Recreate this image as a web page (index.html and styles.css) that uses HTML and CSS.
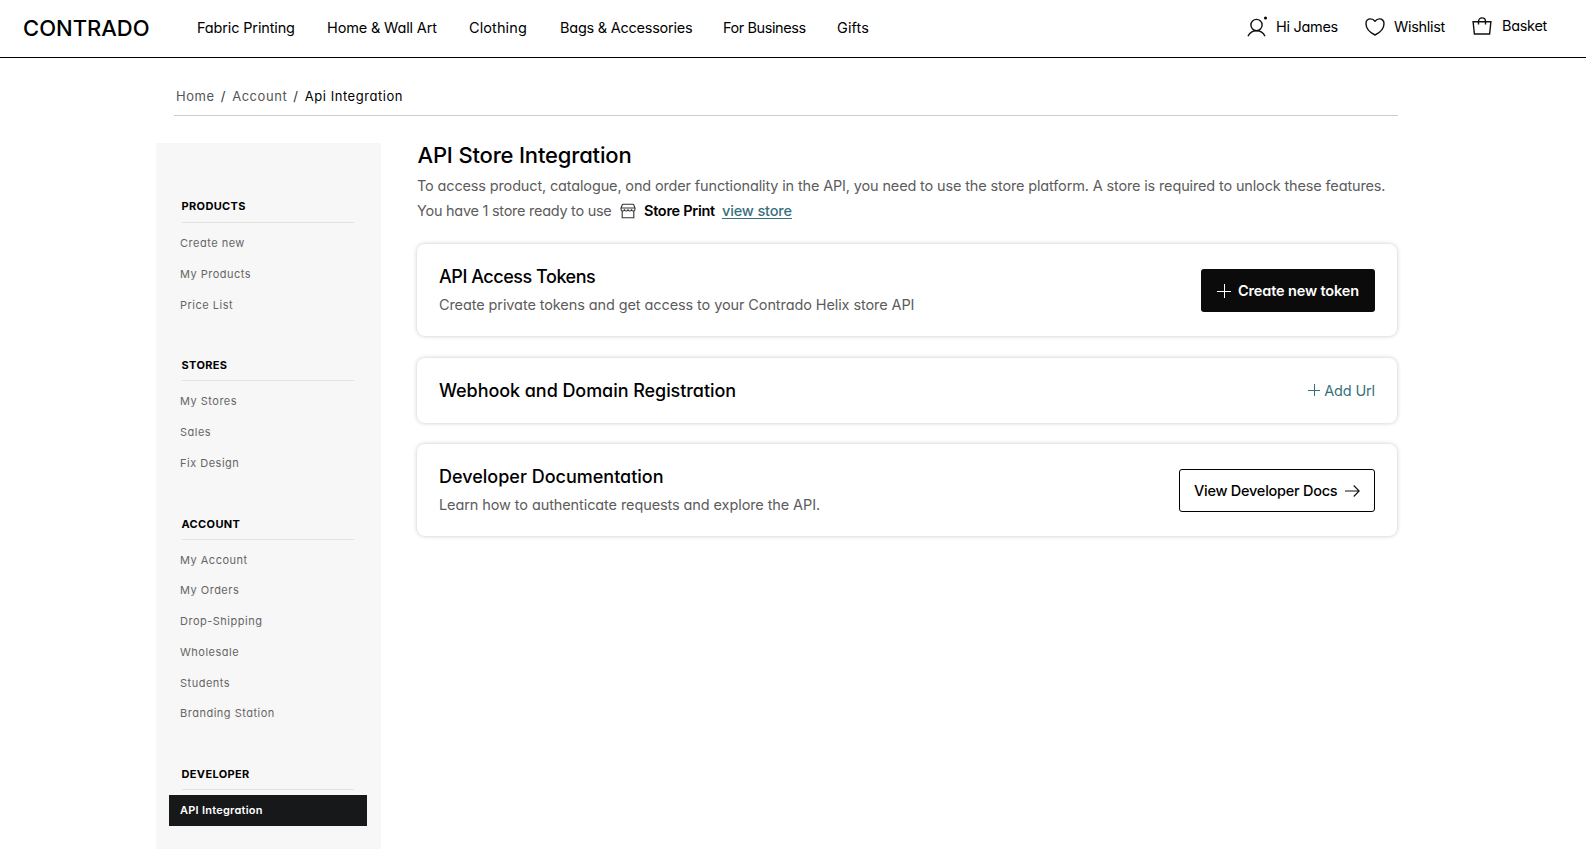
FILE: index.html
```
<!DOCTYPE html>
<html lang="en">
  <head>
    <meta charset="utf-8">
    <title>Api Integration</title>
    <link rel="stylesheet" href="styles.css">
  </head>
  <body>
    <header class="header">
      <a class="logo">CONTRADO</a>
      <nav class="main-nav">
        <a>Fabric Printing</a>
        <a>Home &amp; Wall Art</a>
        <a class="loose">Clothing</a>
        <a class="tight">Bags &amp; Accessories</a>
        <a class="tighter">For Business</a>
        <a class="loose">Gifts</a>
      </nav>
      <div class="user-nav">
        <a>
          <svg width="20" height="22" viewBox="0 0 20 22" fill="none" stroke="#111" stroke-width="1.4">
            <circle cx="9.500" cy="9" r="5.600"/>
            <path d="M1 20.300C2.600 17 5.800 14.800 9.500 14.800s6.900 2.200 8.500 5.500"/>
            <circle cx="18.500" cy="2" r="1.500" fill="#000" stroke="none"/>
          </svg>
          <span>Hi James</span>
        </a>
        <a class="wishlist">
          <svg width="20" height="18" viewBox="0 0 20 18" fill="none" stroke="#111" stroke-width="1.4" stroke-linejoin="round">
            <path d="M10 3.2C8.600 1.500 6.900.9 5.600.9 2.900.9 1 2.900 1 5.700c0 4.800 4.200 8.900 9 11.300 4.800-2.400 9-6.500 9-11.300C19 2.900 17.100.9 14.400.9c-1.300 0-3 .6-4.400 2.300z"/>
          </svg>
          <span>Wishlist</span>
        </a>
        <a class="basket">
          <svg width="20" height="18" viewBox="0 0 20 18" fill="none" stroke="#111" stroke-width="1.4">
            <path d="M1.100 4.700h17.800l-1.300 12.300H2.400z"/>
            <path d="M6.500 7.500V4.500C6.500 2.300 8 .9 10 .9s3.500 1.400 3.500 3.600v3"/>
          </svg>
          <span>Basket</span>
        </a>
      </div>
    </header>

    <div class="breadcrumb">
      <a>Home</a><i>/</i><a>Account</a><i>/</i><b>Api Integration</b>
    </div>

    <div class="page">
      <aside class="sidebar">
        <h4>PRODUCTS</h4>
        <ul>
          <li>Create new</li>
          <li>My Products</li>
          <li>Price List</li>
        </ul>
        <h4>STORES</h4>
        <ul>
          <li>My Stores</li>
          <li>Sales</li>
          <li>Fix Design</li>
        </ul>
        <h4>ACCOUNT</h4>
        <ul>
          <li>My Account</li>
          <li>My Orders</li>
          <li>Drop-Shipping</li>
          <li>Wholesale</li>
          <li>Students</li>
          <li>Branding Station</li>
        </ul>
        <h4>DEVELOPER</h4>
        <ul>
          <li class="active">API Integration</li>
        </ul>
      </aside>

      <main class="content">
        <h1>API Store Integration</h1>
        <p class="intro">To access product, catalogue, ond order functionality in the API, you need to use the store platform. A store is required to unlock these features.</p>
        <div class="store-line">
          <span class="ready">You have 1 store ready to use</span>
          <svg width="16" height="16" viewBox="0 0 16 16" fill="none" stroke="#333" stroke-width="1.1">
            <path d="M2.500 1.200h11M2.500 1.200L1 5v1.200c0 2.300 3.500 2.300 3.500 0 0 2.300 3.500 2.300 3.500 0 0 2.300 3.500 2.300 3.500 0 0 2.300 3.500 2.300 3.500 0V5l-1.500-3.800M1 5h14"/>
            <path d="M2.200 8v6.700h11.600V8"/>
          </svg>
          <b>Store Print</b>
          <a>view store</a>
        </div>

        <section class="card">
          <div>
            <h2 class="tokens">API Access Tokens</h2>
            <p>Create private tokens and get access to your Contrado Helix store API</p>
          </div>
          <button class="btn btn-dark">
            <svg width="14" height="14" viewBox="0 0 14 14" stroke="#fff" stroke-width="1"><path d="M0 7.500h14M7.500 0v14"/></svg>
            Create new token
          </button>
        </section>

        <section class="card webhook">
          <h2>Webhook and Domain Registration</h2>
          <a class="add-url">
            <svg width="12" height="12" viewBox="0 0 12 12" stroke="#37707d" stroke-width="1"><path d="M0 6.500h12M6.500 0v12"/></svg>
            Add Url
          </a>
        </section>

        <section class="card">
          <div>
            <h2 class="docs">Developer Documentation</h2>
            <p>Learn how to authenticate requests and explore the API.</p>
          </div>
          <button class="btn btn-light">
            View Developer Docs
            <svg width="15" height="12" viewBox="0 0 15 12" fill="none" stroke="#111" stroke-width="1.1"><path d="M0 6h14M8.700.5L14.200 6l-5.500 5.500"/></svg>
          </button>
        </section>
      </main>
    </div>
  </body>
</html>
```
FILE: styles.css
```
* {box-sizing: border-box; padding: 0; margin: 0}
body {
  height: 849px;
  overflow: hidden;
  display: flex;
  flex-direction: column;
  background: #fff;
  color: #000;
  font-family: Inter, "Liberation Sans", sans-serif;
  font-feature-settings: "cv11";
  font-size: 14.5px;
}
svg {display: block; flex: none;}
ul {list-style: none;}

.header {
  display: flex;
  height: 58px;
  padding-left: 23px;
  border-bottom: 1px solid #000;
}
.logo {
  width: 174px;
  font-size: 22px;
  font-weight: 500;
  line-height: 56px;
  letter-spacing: 0;
}
.main-nav {
  display: grid;
  grid-template-columns: 130px 142px 91px 163px 114px 60px;
  line-height: 56px;
  letter-spacing: -0.15px;
  white-space: nowrap;
}
.main-nav .loose {letter-spacing: 0.1px;}
.main-nav .tight {letter-spacing: -0.24px;}
.main-nav .tighter {letter-spacing: -0.42px;}
.user-nav {
  display: flex;
  margin-left: auto;
  padding-right: 39px;
  letter-spacing: -0.3px;
}
.user-nav a {
  display: flex;
  gap: 9px;
  height: 54px;
  align-items: center;
  white-space: nowrap;
}
.user-nav span {line-height: 18px; padding-bottom: 1px;}
.user-nav a:first-child svg {margin-top: -1px;}
.user-nav a:first-child span {width: 61px;}
.user-nav .wishlist {margin-left: 28px;}
.user-nav .wishlist span {width: 52px;}
.user-nav .basket {gap: 10px; margin-left: 26px; height: 52px;}
.user-nav .basket span {width: 45px;}

.breadcrumb {
  display: flex;
  width: 1224px;
  height: 58px;
  margin-left: 174px;
  padding: 28px 0 0 2px;
  border-bottom: 1px solid #ccc;
  font-size: 13px;
  line-height: 21px;
  letter-spacing: 0.55px;
  color: #555;
}
.breadcrumb i {width: 17.5px; text-align: center; font-style: normal; color: #333;}
.breadcrumb b {font-weight: 400; color: #000;}

.page {
  flex: 1;
  display: flex;
  margin: 27px 0 0 156px;
}

.sidebar {
  width: 225px;
  background: #f7f7f7;
  font-size: 11px;
  letter-spacing: 0.5px;
}
.sidebar h4 {
  height: 61px;
  margin: 0 27px 5px 26px;
  padding-top: 38px;
  border-bottom: 1px solid #e3e3e3;
  font-size: 11px;
  font-weight: 700;
  line-height: 14px;
  letter-spacing: 0.35px;
  text-indent: -0.5px;
}
.sidebar h4:first-child {height: 80px; padding-top: 56px;}
.sidebar li {
  height: 30.77px;
  margin: 0 14px 0 13px;
  padding-left: 11px;
  line-height: 30px;
  color: #666;
}
.sidebar .active {
  background: #16181a;
  color: #fff;
  font-weight: 600;
  letter-spacing: 0.25px;
}

.content {
  width: 980px;
  margin-left: 36px;
}
.content h1 {
  padding-left: 0.5px;
  font-size: 22px;
  font-weight: 500;
  line-height: 24px;
  letter-spacing: -0.17px;
}
.intro {
  padding-top: 6px;
  line-height: 25px;
  letter-spacing: -0.15px;
  white-space: nowrap;
  color: #5c5c5c;
}
.store-line {
  display: flex;
  align-items: center;
  height: 25px;
  margin-bottom: 21px;
  letter-spacing: -0.27px;
  color: #5c5c5c;
}
.store-line svg {margin: 0 8px 0 9px;}
.store-line .ready {width: 194px; white-space: nowrap;}
.store-line b {width: 78px; font-weight: 600; color: #000;}
.store-line a {
  font-weight: 500;
  letter-spacing: -0.15px;
  color: #37707d;
  text-decoration: underline;
  text-underline-offset: 2px;
}

.card {
  display: flex;
  align-items: center;
  justify-content: space-between;
  margin-bottom: 22px;
  padding: 22px 22px 20px;
  border-radius: 8px;
  background: #fff;
  box-shadow: 0 0 4px rgba(0, 0, 0, 0.22);
}
.card.webhook {margin-bottom: 21px; padding-bottom: 21px;}
.card h2 {
  font-size: 18px;
  font-weight: 500;
  line-height: 22px;
  letter-spacing: -0.06px;
}
.card .tokens {letter-spacing: -0.46px;}
.card .docs {letter-spacing: 0;}
.card p {
  margin-top: 6px;
  line-height: 22px;
  letter-spacing: -0.1px;
  color: #5c5c5c;
}
.btn {
  display: flex;
  align-items: center;
  height: 43px;
  margin-bottom: 1px;
  border-radius: 3px;
  font: inherit;
  white-space: nowrap;
}
.btn-dark {
  gap: 7px;
  width: 174px;
  padding-left: 16px;
  border: 0;
  background: #0b0b0b;
  color: #fff;
  font-weight: 600;
  letter-spacing: -0.14px;
}
.btn-light {
  gap: 8px;
  width: 196px;
  padding-left: 14px;
  border: 1px solid #000;
  background: #fff;
  color: #000;
  font-weight: 500;
  letter-spacing: -0.25px;
}
.add-url {
  display: flex;
  align-items: center;
  gap: 4px;
  margin-bottom: 2px;
  letter-spacing: -0.14px;
  color: #37707d;
}
```
